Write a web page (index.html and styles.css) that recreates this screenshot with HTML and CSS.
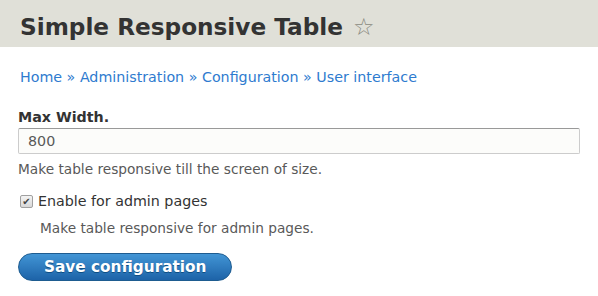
FILE: index.html
```html
<html>
<head>
	<title>Simple Responsive Table</title>
	<link rel="stylesheet" href="styles.css">
</head>
<body>
	<header class="page-head">
		<h1 class="page-title">Simple Responsive Table <span class="shortcut">&#9734;</span></h1>
	</header>
	<div class="content">
		<nav class="breadcrumb">
			<a href="#">Home</a> &raquo; <a href="#">Administration</a> &raquo; <a href="#">Configuration</a> &raquo; <a href="#">User interface</a>
		</nav>
		<form class="config-form">
			<div class="form-item">
				<label class="field-label" for="max-width">Max Width.</label>
				<input type="text" id="max-width" class="form-text" value="800">
				<div class="description">Make table responsive till the screen of size.</div>
			</div>
			<div class="form-item form-checkbox">
				<span class="check-box">&#10004;</span>
				<label class="option">Enable for admin pages</label>
				<div class="description indent">Make table responsive for admin pages.</div>
			</div>
			<div class="actions">
				<button type="button" class="button-primary">Save configuration</button>
			</div>
		</form>
	</div>
</body>
</html>
```
FILE: styles.css
```css
* {font-family: "DejaVu Sans", Verdana, sans-serif}
body {margin: 0; background-color: #fff; color: #333;}

.page-head {background-color: #e0e0d8; height: 47px; padding: 0 20px; box-sizing: border-box;}
.page-title {margin: 0; font-size: 23.2px; font-weight: bold; color: #333; line-height: 54px;}
.shortcut {font-weight: normal; color: #8a8a80; font-size: 24px; margin-left: 2px;}

.content {padding: 0 18px;}
.breadcrumb {font-size: 14.25px; padding: 20px 2px 0; line-height: 20px; color: #2e7bcf;}
.breadcrumb a {color: #2e7bcf; text-decoration: none;}

.config-form {margin-top: 21px;}
.form-item {margin-bottom: 14px;}
.field-label {display: block; font-weight: bold; font-size: 14.25px; line-height: 18px; margin-bottom: 2px;}
.form-text {display: block; width: 100%; box-sizing: border-box; height: 26px; border: 1px solid #ccc; border-top-color: #999; border-radius: 2px; background-color: #fcfcfa; font-size: 14.25px; color: #595959; padding: 2px 9px;}
.description {font-size: 13.7px; color: #595959; line-height: 18px; margin-top: 6px;}

.form-checkbox {display: flex; flex-wrap: wrap; align-items: center; margin-bottom: 0;}
.check-box {width: 11px; height: 11px; margin: 0 5px 0 2px; border: 1px solid #a0a0a0; border-radius: 2px; background: linear-gradient(#f4f4f4, #d8d8d8); color: #444; font-size: 10px; line-height: 11px; text-align: center;}
.option {font-size: 14.25px; line-height: 18px;}
.description.indent {flex-basis: 100%; padding-left: 22px; margin-top: 9px;}

.actions {margin-top: 16px;}
.button-primary {font-size: 15.3px; font-weight: bold; color: #fff; border: 1px solid #1e5c90; border-radius: 20px; padding: 4px 25px; height: 28px; background: linear-gradient(#4295d5, #1d63a8); text-shadow: 0 1px 0 #0e4e84;}
```
